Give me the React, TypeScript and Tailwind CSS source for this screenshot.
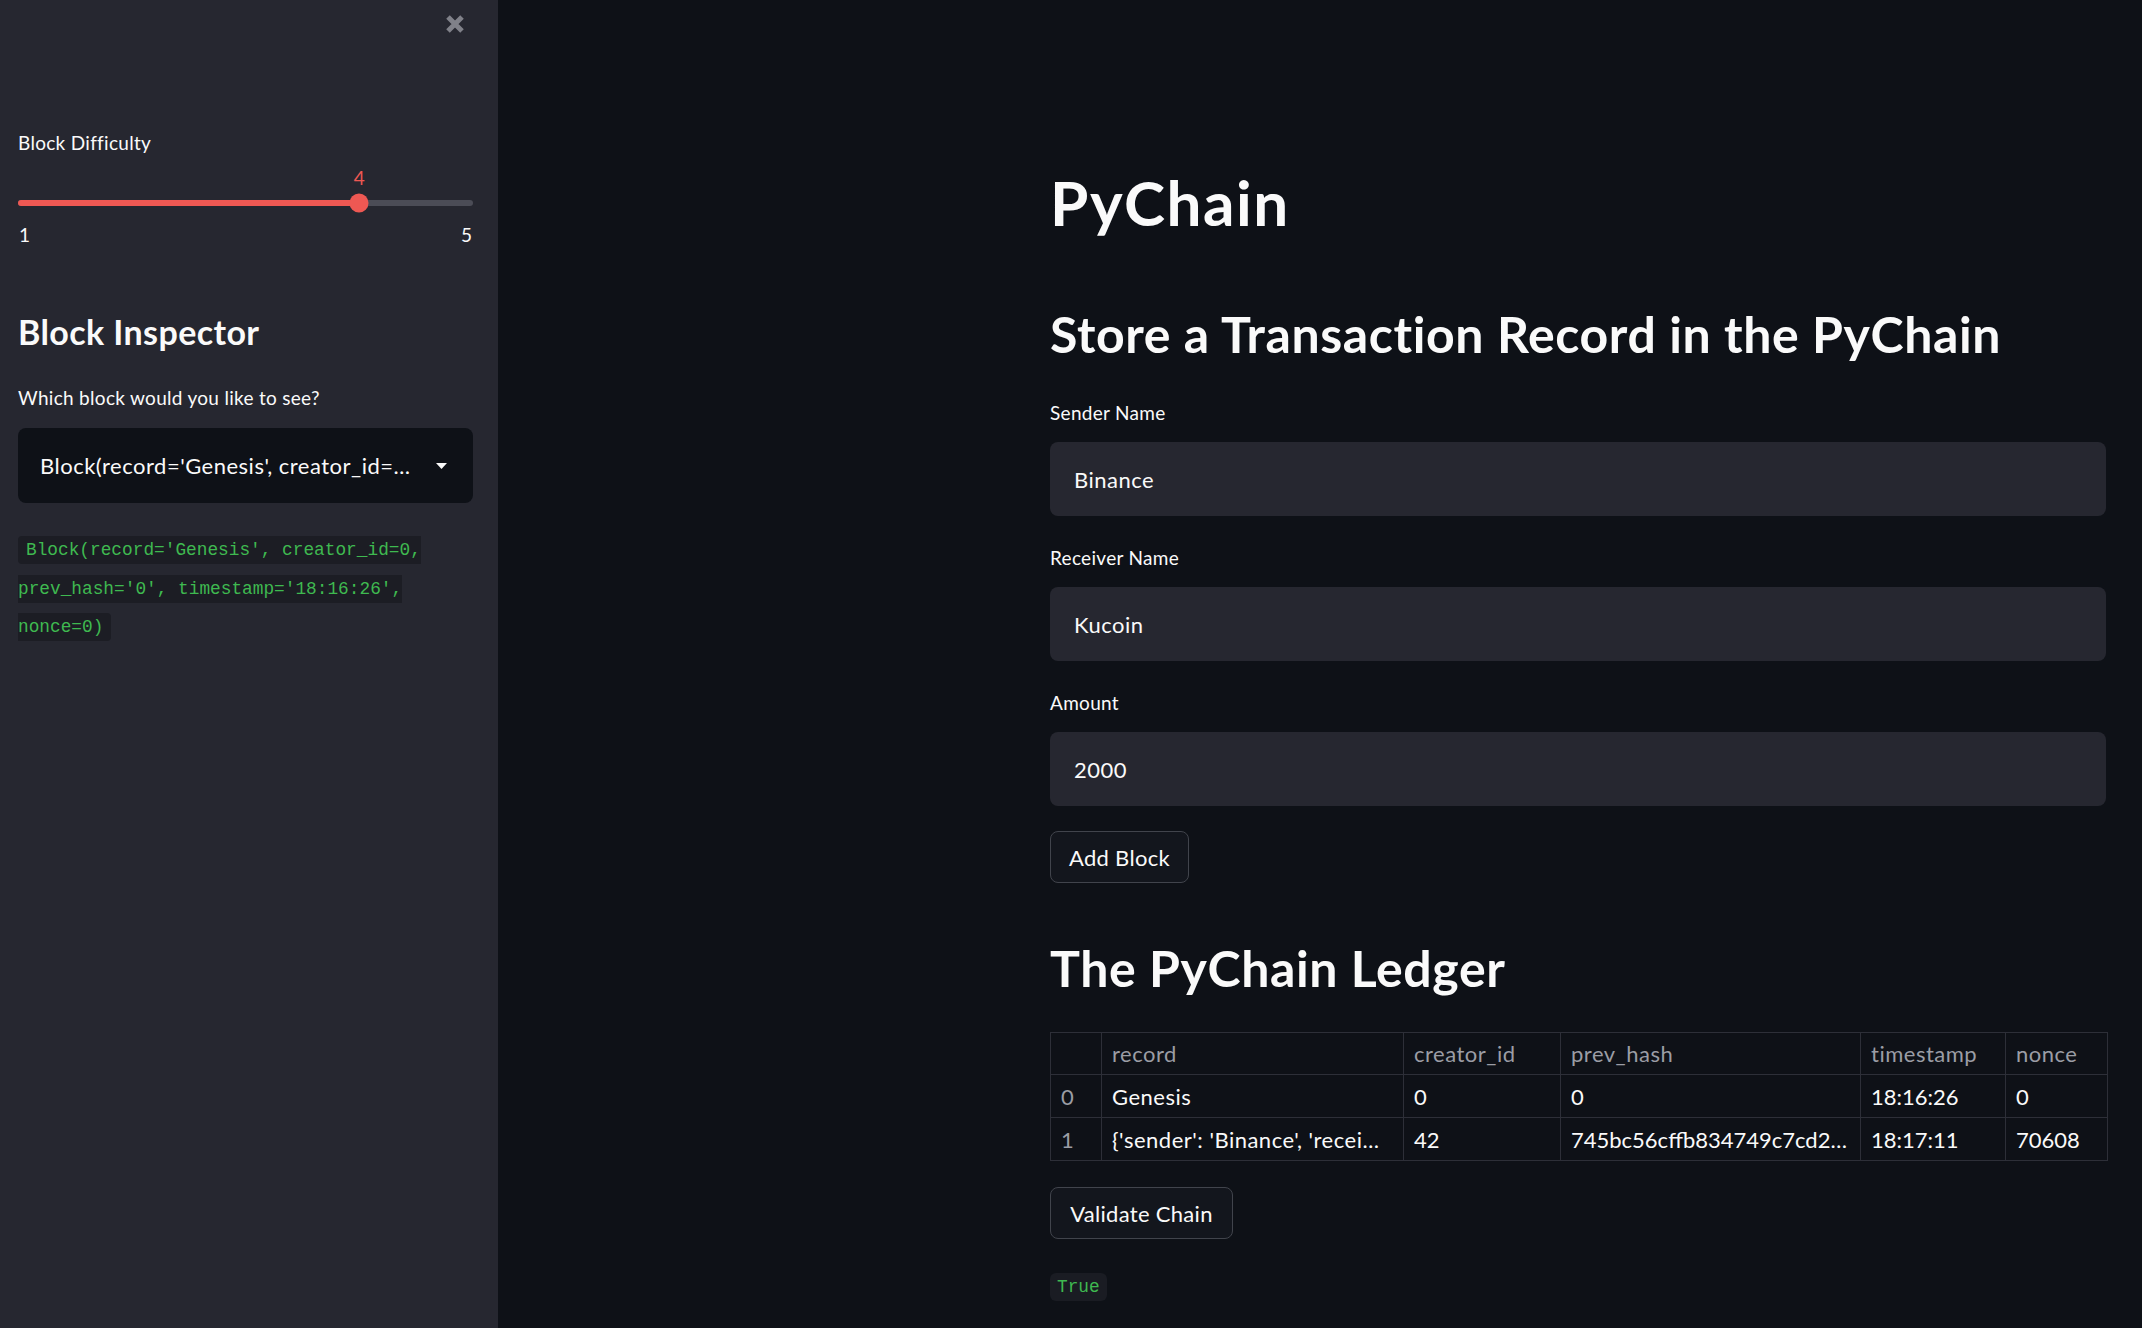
const rows = [
  { idx: "0", record: "Genesis", creator: "0", prev: "0", ts: "18:16:26", nonce: "0" },
  {
    idx: "1",
    record: "{'sender': 'Binance', 'recei…",
    creator: "42",
    prev: "745bc56cffb834749c7cd2…",
    ts: "18:17:11",
    nonce: "70608",
  },
];

function Field({ label, value }: { label: string; value: string }) {
  return (
    <div className="mt-[27px]">
      <div className="h-[30px] leading-[30px] text-[19px] tracking-[0.3px]">{label}</div>
      <div className="mt-[14px] h-[74px] rounded-[8px] bg-[#262730] flex items-center px-[24px] text-[22px] tracking-[0.5px]">
        {value}
      </div>
    </div>
  );
}

function Button({ children, w }: { children: string; w: string }) {
  return (
    <button
      className={`h-[52px] ${w} rounded-[8px] border border-[#41444c] bg-[#13161d] text-[22px] tracking-[0.3px] text-[#fafafa] flex items-center justify-center`}
    >
      {children}
    </button>
  );
}

const cell = "border border-[#2d2f38] px-[10px]";

export default function App() {
  return (
    <div className="flex w-full h-[1328px] text-[#fafafa] font-['Lato','Noto_Sans',sans-serif] overflow-hidden">
      {/* sidebar */}
      <aside className="w-[498px] shrink-0 bg-[#262730] pl-[18px] pr-[25px]">
        <div className="h-[48px] flex justify-end items-center pr-[7px]">
          <svg width="22" height="22" viewBox="0 0 22 22">
            <path d="M4 4 L18 18 M18 4 L4 18" stroke="#808189" strokeWidth="5" />
          </svg>
        </div>
        <div className="mt-[80px] h-[30px] leading-[30px] text-[19px] tracking-[0.3px]">Block Difficulty</div>

        <div className="relative mt-[5px] h-[30px]">
          <span className="absolute left-[75%] -translate-x-1/2 leading-[30px] text-[19px] text-[#ee5853]">4</span>
        </div>
        <div className="h-[20px] flex items-center">
          <div className="relative w-full h-[6px] rounded-full bg-[#4b4c56]">
            <div className="h-full w-3/4 rounded-full bg-[#ee5853]" />
            <div className="absolute left-3/4 top-1/2 w-[19px] h-[19px] -translate-x-1/2 -translate-y-1/2 rounded-full bg-[#ee5853]" />
          </div>
        </div>
        <div className="mt-[7px] h-[30px] flex justify-between items-center text-[19px] px-[1px]">
          <span>1</span>
          <span>5</span>
        </div>

        <h2 className="mt-[62px] h-[40px] leading-[40px] text-[34px] tracking-[0.4px] font-bold">Block Inspector</h2>
        <div className="mt-[31px] h-[30px] leading-[30px] text-[19px] tracking-[0.3px]">
          Which block would you like to see?
        </div>
        <div className="mt-[15px] h-[75px] rounded-[8px] bg-[#0e1117] flex items-center justify-between pl-[22px] pr-[26px] text-[22px] tracking-[0.5px]">
          <span className="whitespace-nowrap">Block(record='Genesis', creator_id=…</span>
          <svg width="11" height="6" viewBox="0 0 11 6">
            <path d="M0 0 H11 L5.5 6 Z" fill="#fafafa" />
          </svg>
        </div>
        <p className="mt-[28px] leading-[38.5px] font-['Liberation_Mono',monospace] text-[17.8px] text-[#3fb950]">
          <code className="bg-[#1c1d24] rounded-[4px] py-[4px] px-[8px]">
            Block(record='Genesis', creator_id=0, prev_hash='0', timestamp='18:16:26', nonce=0)
          </code>
        </p>
      </aside>

      {/* main */}
      <main className="flex-1 bg-[#0e1117]">
        <div className="ml-[552px] w-[1056px]">
          <h1 className="mt-[166px] h-[72px] leading-[72px] text-[62px] tracking-[1.5px] font-bold">PyChain</h1>
          <h2 className="mt-[66px] h-[60px] leading-[60px] text-[50px] tracking-[0.6px] font-bold">
            Store a Transaction Record in the PyChain
          </h2>
          <div className="flex flex-col pt-[7px]">
            <Field label="Sender Name" value="Binance" />
            <Field label="Receiver Name" value="Kucoin" />
            <Field label="Amount" value="2000" />
          </div>
          <div className="mt-[25px]">
            <Button w="w-[139px]">Add Block</Button>
          </div>

          <h2 className="mt-[55px] h-[60px] leading-[60px] text-[50px] tracking-[0.6px] font-bold">
            The PyChain Ledger
          </h2>

          <table className="mt-[34px] w-[1057px] table-fixed border-collapse text-[22px] tracking-[0.5px]">
            <colgroup>
              <col className="w-[51px]" />
              <col className="w-[302px]" />
              <col className="w-[157px]" />
              <col className="w-[300px]" />
              <col className="w-[145px]" />
              <col className="w-[102px]" />
            </colgroup>
            <thead>
              <tr className="h-[42px] text-[#9b9da5]">
                <th className={cell} />
                {["record", "creator_id", "prev_hash", "timestamp", "nonce"].map((h) => (
                  <th key={h} className={`${cell} text-left font-normal`}>
                    {h}
                  </th>
                ))}
              </tr>
            </thead>
            <tbody>
              {rows.map((r) => (
                <tr key={r.idx} className="h-[43px]">
                  <td className={`${cell} text-[#9b9da5]`}>{r.idx}</td>
                  <td className={`${cell} whitespace-nowrap overflow-hidden`}>{r.record}</td>
                  <td className={`${cell} tracking-normal`}>{r.creator}</td>
                  <td className={`${cell} whitespace-nowrap overflow-hidden tracking-normal`}>{r.prev}</td>
                  <td className={`${cell} tracking-normal`}>{r.ts}</td>
                  <td className={`${cell} tracking-normal`}>{r.nonce}</td>
                </tr>
              ))}
            </tbody>
          </table>

          <div className="mt-[26px]">
            <Button w="w-[183px]">Validate Chain</Button>
          </div>
          <div className="mt-[34px]">
            <code className="inline-flex items-center h-[28px] px-[7px] rounded-[6px] bg-[#1a1c23] font-['Liberation_Mono',monospace] text-[17.8px] text-[#3fb950]">
              True
            </code>
          </div>
        </div>
      </main>
    </div>
  );
}
